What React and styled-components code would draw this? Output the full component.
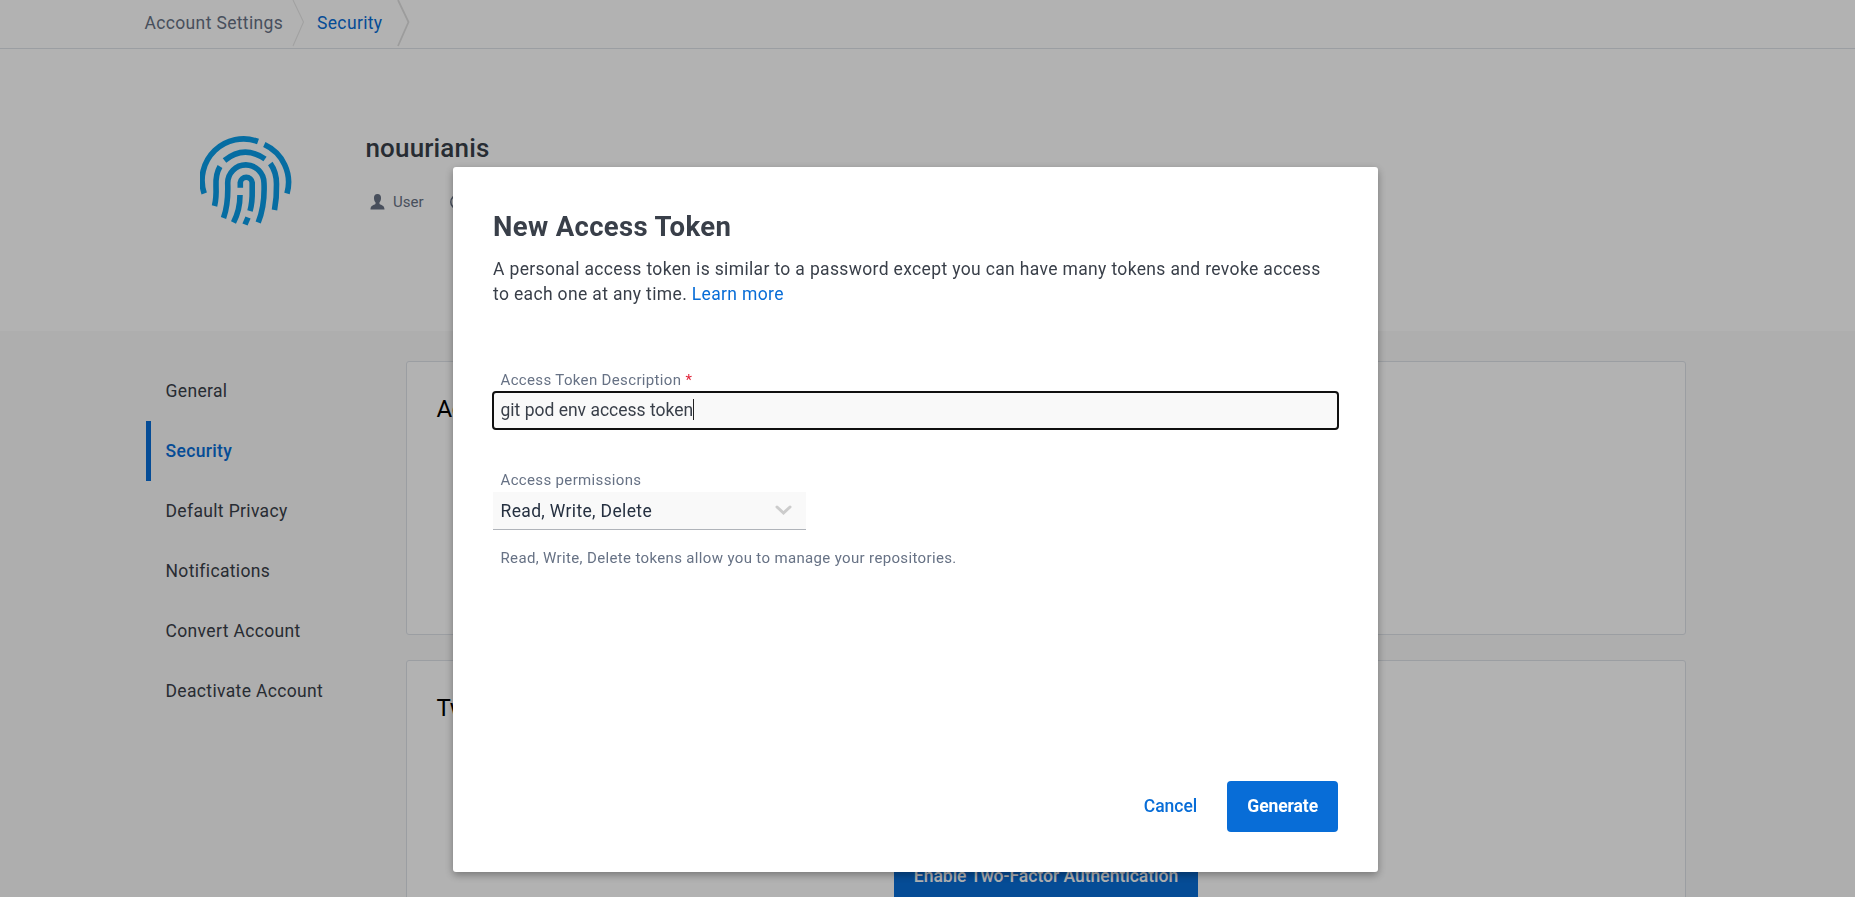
import React from 'react';
import styled, { createGlobalStyle } from 'styled-components';

const Global = createGlobalStyle`
  * { box-sizing: border-box; }
  html, body { margin: 0; height: 897px; overflow: hidden; }
  body { background: #fff; font-family: Roboto, "Liberation Sans", sans-serif; color: #393f49; }
  h1, h2, h3, p { margin: 0; }
`;

const Page = styled.div`
  height: 897px;
  overflow: hidden;
  display: flex;
  flex-direction: column;
`;
const Breadcrumbs = styled.nav`
  height: 49px;
  flex: none;
  display: flex;
  padding-left: 144.5px;
  border-bottom: 1px solid #dfe3e9;
`;
const Crumb = styled.a`
  height: 46px;
  line-height: 46px;
  width: ${p => p.$width}px;
  font-size: 17.5px;
  letter-spacing: 0.35px;
  white-space: nowrap;
  color: ${p => (p.$active ? '#086dd7' : '#677285')};
`;
const Chevron = styled.svg`
  flex: none;
  width: 13px;
  height: 47px;
  margin-right: ${p => p.$gap || 0}px;
`;
const Profile = styled.header`
  height: 282px;
  flex: none;
  display: flex;
  padding: 87px 0 0 200px;
`;
const Avatar = styled.svg`
  width: 92px;
  height: 92px;
`;
const Identity = styled.div`
  margin-left: 73.5px;
`;
const UserName = styled.h1`
  font-size: 26px;
  line-height: 30px;
  letter-spacing: 0.15px;
  font-weight: 500;
  margin-top: -3px;
`;
const Meta = styled.div`
  display: flex;
  align-items: center;
  margin-top: 29px;
  height: 20px;
  font-size: 15px;
  color: #677285;
`;
const MetaText = styled.span`
  margin: 0 26px 0 4.5px;
`;
const Body = styled.main`
  flex: 1;
  min-height: 0;
  background: #f9f9f9;
  display: flex;
  padding: 30px 0 0 146px;
`;
const SideNav = styled.nav`
  width: 260px;
  flex: none;
`;
const SideItem = styled.a`
  display: flex;
  align-items: center;
  height: 60px;
  padding: 0 0 1px 14.5px;
  border-left: 5px solid ${p => (p.$active ? '#086dd7' : 'transparent')};
  font-size: 17.5px;
  letter-spacing: 0.35px;
  font-weight: ${p => (p.$active ? 500 : 400)};
  color: ${p => (p.$active ? '#086dd7' : '#393f49')};
`;
const Cards = styled.div`
  width: 1280px;
  display: flex;
  flex-direction: column;
  gap: 25px;
`;
const Card = styled.section`
  flex: none;
  height: 274px;
  background: #fff;
  border: 1px solid #dfe3e9;
  border-radius: 3px;
  padding: 31px 29.5px;
`;
const CardTitle = styled.h2`
  font-weight: 400;
  font-size: 24px;
  line-height: 32px;
  letter-spacing: -0.4px;
  color: #000;
`;
const CardAction = styled.div`
  display: flex;
  justify-content: center;
  margin-top: 127px;
`;
const Button = styled.button`
  font-family: inherit;
  font-size: 17.5px;
  font-weight: ${p => (p.$strong ? 700 : 500)};
  letter-spacing: ${p => (p.$strong ? '-0.1px' : 'normal')};
  height: 51px;
  padding: 0 20px 1px;
  border: 0;
  border-radius: 4px;
  white-space: nowrap;
  background: ${p => (p.$plain ? 'transparent' : '#086dd7')};
  color: ${p => (p.$plain ? '#086dd7' : '#fff')};
`;
const Overlay = styled.div`
  position: fixed;
  inset: 0;
  background: rgba(0, 0, 0, 0.3);
  padding: 167px 0 0 453px;
`;
const Dialog = styled.div`
  width: 925px;
  height: 705px;
  padding: 40px;
  background: #fff;
  border-radius: 3px;
  box-shadow: 0 3px 9px rgba(0, 0, 0, 0.34);
  display: flex;
  flex-direction: column;
`;
const DialogTitle = styled.h2`
  font-size: 27.5px;
  line-height: 40px;
  font-weight: 700;
  letter-spacing: 0.35px;
`;
const Intro = styled.p`
  margin-top: 10px;
  font-size: 17.5px;
  line-height: 25px;
  letter-spacing: 0.35px;
  white-space: nowrap;
`;
const Link = styled.a`
  color: #086dd7;
`;
const Label = styled.label`
  display: block;
  margin-top: ${p => p.$top}px;
  padding-left: 7.5px;
  font-size: 15px;
  line-height: 20px;
  letter-spacing: 0.35px;
  color: #677285;
`;
const Required = styled.span`
  color: #e2233a;
`;
const Field = styled.div`
  display: flex;
  align-items: center;
  margin: 1px -1px 0;
  height: 39px;
  padding: 0 0 2px 6.5px;
  background: #f9f9f9;
  border: 2px solid #101010;
  border-radius: 4px;
  font-size: 17.5px;
`;
const Caret = styled.span`
  width: 1px;
  height: 21px;
  background: #222;
`;
const Select = styled.div`
  width: 313px;
  height: 38px;
  margin-top: 2px;
  padding: 0 14px 0 7.5px;
  display: flex;
  align-items: center;
  justify-content: space-between;
  background: #f9f9f9;
  border-bottom: 1px solid #b0b4ba;
  font-size: 17.5px;
  letter-spacing: 0.35px;
  color: #253040;
`;
const Footer = styled.div`
  margin-top: auto;
  display: flex;
  justify-content: flex-end;
  gap: 10px;
`;

const Divider = ({ gap, heavy }) => (
  <Chevron $gap={gap} viewBox="0 0 13 47" fill="none">
    <path d="M1 0L11.5 22L1 46" stroke={heavy ? '#e0e0e0' : '#e8e8e8'} strokeWidth={heavy ? 1.8 : 1.1} />
  </Chevron>
);

const Fingerprint = () => (
  <Avatar viewBox="0 0 92 92" fill="none" stroke="#0a9de8" strokeWidth="5.6">
    <path d="M4.200 57.500A41.500 41.500 0 0 1 58 5.500" />
    <path d="M64.300 8.500A41.500 41.500 0 0 1 87 57.500" />
    <path d="M24.500 24.500Q44 8.500 65 23" />
    <path d="M20 30.500Q15.500 38 16 50Q16.500 62 14.500 70" />
    <path d="M70.300 27.500Q76.500 36 76.500 48Q76.800 62 74.500 74" />
    <path d="M23.500 82Q28.500 68 27.700 47A18 18 0 0 1 64 47Q65 70 58.200 86.500" />
    <path d="M40.300 51.700V46.500A6 6 0 0 1 52.200 46.500V54Q52.500 66 50 75" />
    <path d="M40 59Q40 74 33.500 86.500" />
    <path d="M48 81.500L45 88.500" />
  </Avatar>
);

const NAV = ['General', 'Security', 'Default Privacy', 'Notifications', 'Convert Account', 'Deactivate Account'];

export default function App() {
  return (
    <>
      <Global />
      <Page>
        <Breadcrumbs>
          <Crumb $width={147}>Account Settings</Crumb>
          <Divider gap={12.5} />
          <Crumb $active $width={80}>Security</Crumb>
          <Divider heavy />
        </Breadcrumbs>
        <Profile>
          <Fingerprint />
          <Identity>
            <UserName>nouurianis</UserName>
            <Meta>
              <svg width="23" height="16" viewBox="0 0 23 16" fill="#677285">
                <path d="M11.500 0C14 0 15.300 1.800 15 4.500C14.800 6.600 14.200 7.600 13.500 8.300V10C15.500 11.200 18.500 11.500 18.500 15.500H4.500C4.500 11.500 7.500 11.200 9.500 10V8.300C8.800 7.600 8.200 6.600 8 4.500C7.700 1.800 9 0 11.500 0Z" />
              </svg>
              <MetaText>User</MetaText>
              <svg width="16" height="16" viewBox="0 0 16 16" fill="none" stroke="#677285" strokeWidth="1.500">
                <circle cx="8" cy="8" r="7.200" />
                <path d="M8 4V8H11" />
              </svg>
            </Meta>
          </Identity>
        </Profile>
        <Body>
          <SideNav>
            {NAV.map(item => (
              <SideItem key={item} $active={item === 'Security'}>{item}</SideItem>
            ))}
          </SideNav>
          <Cards>
            <Card>
              <CardTitle>Access Tokens</CardTitle>
            </Card>
            <Card>
              <CardTitle>Two-Factor Authentication</CardTitle>
              <CardAction>
                <Button>Enable Two-Factor Authentication</Button>
              </CardAction>
            </Card>
          </Cards>
        </Body>
      </Page>
      <Overlay>
        <Dialog>
          <DialogTitle>New Access Token</DialogTitle>
          <Intro>
            A personal access token is similar to a password except you can have many tokens and revoke access
            <br />
            to each one at any time. <Link>Learn more</Link>
          </Intro>
          <Label $top={63}>Access Token Description <Required>*</Required></Label>
          <Field>git pod env access token<Caret /></Field>
          <Label $top={40}>Access permissions</Label>
          <Select>
            Read, Write, Delete
            <svg width="17" height="11" viewBox="0 0 17 11" fill="none" stroke="#ccc" strokeWidth="3">
              <path d="M2 2L8.500 8L15 2" strokeLinecap="round" />
            </svg>
          </Select>
          <Label $top={18}>Read, Write, Delete tokens allow you to manage your repositories.</Label>
          <Footer>
            <Button $plain>Cancel</Button>
            <Button $strong>Generate</Button>
          </Footer>
        </Dialog>
      </Overlay>
    </>
  );
}
